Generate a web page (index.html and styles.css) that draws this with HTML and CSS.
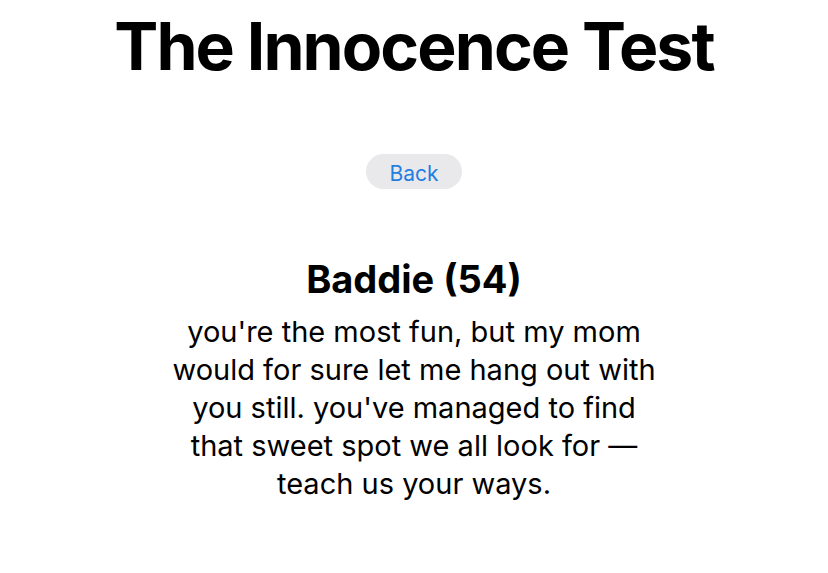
FILE: index.html
```html
<!DOCTYPE html>
<html>
<head>
<meta charset="utf-8">
<link rel="stylesheet" href="styles.css">
</head>
<body>
<main class="page">
  <h1 class="title">The Innocence Test</h1>
  <button class="back">Back</button>
  <section class="result">
    <h2 class="result-title">Baddie (54)</h2>
    <p class="result-text">you're the most fun, but my mom would for sure let me hang out with you still. you've managed to find that sweet spot we all look for — teach us your ways.</p>
  </section>
</main>
</body>
</html>
```
FILE: styles.css
```css
html, body {
  margin: 0;
  padding: 0;
  background: #ffffff;
}
body {
  font-family: Inter, "Noto Sans", Roboto, sans-serif;
  color: #000;
}
.page {
  display: flex;
  flex-direction: column;
  align-items: center;
}
.title {
  margin: 6px 0 0 0;
  font-size: 66px;
  font-weight: 700;
  line-height: 80px;
  letter-spacing: -1.9px;
}
.back {
  margin-top: 68px;
  height: 35px;
  width: 96px;
  border: none;
  border-radius: 18px;
  background: #e9e9eb;
  color: #1f7ee0;
  font-family: Inter, "Noto Sans", sans-serif;
  font-size: 21px;
  padding: 3px 0 0 0;
}
.result {
  margin-top: 68px;
  width: 490px;
  text-align: center;
}
.result-title {
  margin: 0;
  font-size: 38px;
  font-weight: 700;
  line-height: 44px;
}
.result-text {
  margin: 12px 0 0 0;
  font-size: 29px;
  line-height: 38px;
}
```
